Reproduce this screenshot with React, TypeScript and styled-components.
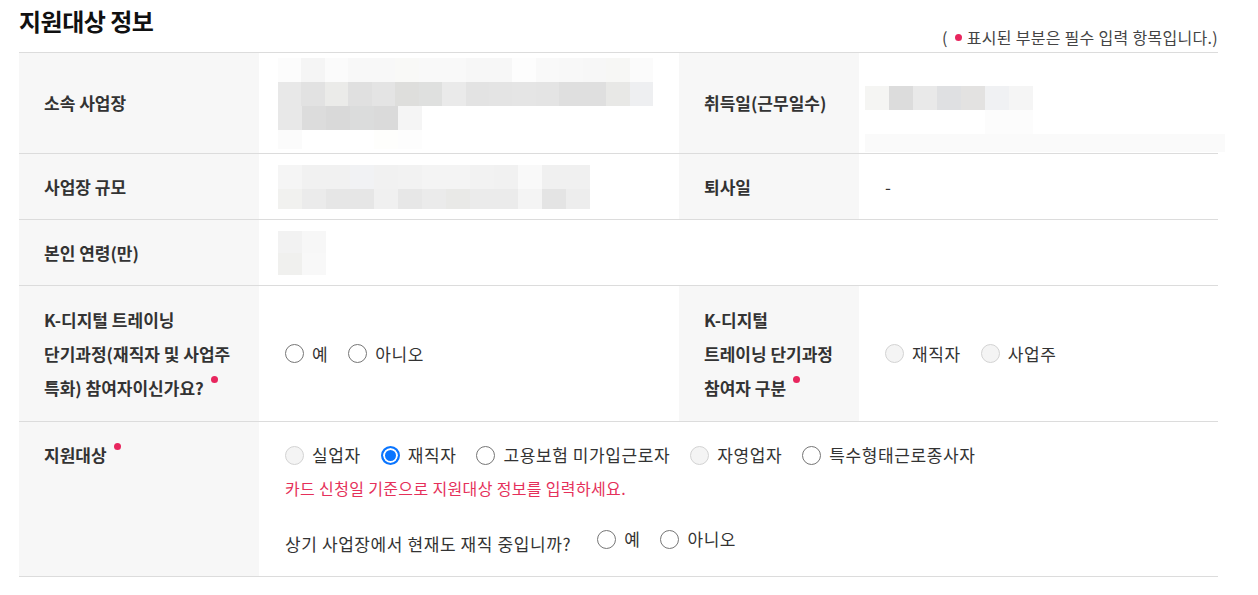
import React from 'react'
import styled, { createGlobalStyle } from 'styled-components'

const GlobalStyle = createGlobalStyle`
  body {
    margin: 0;
    background: #fff;
    font-family: "Noto Sans CJK KR", "Noto Sans", sans-serif;
    color: #333;
  }
`

const Page = styled.div`
  width: 1199px;
  padding-left: 19px;
`

const Header = styled.div`
  display: flex;
  justify-content: space-between;
  height: 52px;
`

const Title = styled.h2`
  margin: 4px 0 0;
  font-size: 24px;
  line-height: 34px;
  font-weight: 700;
  color: #111;
  letter-spacing: -0.5px;
`

const Notice = styled.p`
  align-self: flex-end;
  margin: 0 0 5px;
  font-size: 16px;
  line-height: 20px;
  letter-spacing: 0.3px;
  color: #444;
  display: flex;
  align-items: center;
  gap: 5px;
`

const Dot = styled.span<{ $raised?: boolean }>`
  display: inline-block;
  width: 7px;
  height: 7px;
  border-radius: 50%;
  background: #e8265e;
  margin-left: ${({ $raised }) => ($raised ? '7px' : '2px')};
  vertical-align: ${({ $raised }) => ($raised ? '0.7em' : 'middle')};
`

const Table = styled.div`
  border-top: 1px solid #dcdcdc;
`

const Row = styled.div<{ $h: number }>`
  display: grid;
  grid-template-columns: 240px 420px 180px 1fr;
  min-height: ${({ $h }) => $h}px;
  border-bottom: 1px solid #dcdcdc;
`

const Label = styled.div<{ $top?: boolean; $tall?: boolean }>`
  background: #f7f7f7;
  display: flex;
  align-items: ${({ $top }) => ($top ? 'flex-start' : 'center')};
  padding: ${({ $top }) => ($top ? '21px 25px 0' : '0 25px')};
  font-size: 17px;
  font-weight: 700;
  color: #333;
  line-height: ${({ $tall }) => ($tall ? '34px' : '24px')};
  word-break: keep-all;
`

const Value = styled.div<{ $span?: number; $top?: boolean }>`
  display: flex;
  flex-direction: column;
  justify-content: ${({ $top }) => ($top ? 'flex-start' : 'center')};
  padding: ${({ $top }) => ($top ? '21px 26px 0' : '0 26px')};
  grid-column: span ${({ $span }) => $span ?? 1};
  font-size: 17px;
  color: #333;
  line-height: 24px;
`

const MosaicBox = styled.div<{ $shift: number; $pad?: number }>`
  display: flex;
  flex-direction: column;
  margin-left: ${({ $shift }) => -$shift}px;
  margin-top: ${({ $pad }) => $pad ?? 0}px;
`

const MosaicRow = styled.div<{ $h: number }>`
  display: flex;
  height: ${({ $h }) => $h}px;
`

const Cell = styled.span`
  width: 24px;
  height: 100%;
`

const FaintBar = styled.div<{ $shift: number }>`
  margin-left: ${({ $shift }) => -$shift}px;
  width: 360px;
  height: 18px;
  background: #fafafa;
`

const RadioGroup = styled.div`
  display: flex;
  align-items: center;
  gap: 20px;
`

const RadioItem = styled.label`
  display: inline-flex;
  align-items: center;
  gap: 8px;
  font-size: 17px;
  letter-spacing: 0.6px;
  color: #333;
  white-space: nowrap;
`

const RadioInput = styled.input.attrs({ type: 'radio' })`
  appearance: none;
  margin: 0;
  width: 19px;
  height: 19px;
  border-radius: 50%;
  border: 1.5px solid #767676;
  background: #fff;
  flex-shrink: 0;
  box-sizing: border-box;
  &:disabled {
    border-color: #d3d3d3;
    background: #f4f4f4;
  }
  &:checked {
    border: 2px solid #0a75ff;
    background: #0a75ff;
    box-shadow: inset 0 0 0 2px #fff;
  }
`

const Help = styled.p`
  margin: 10px 0 0;
  font-size: 16px;
  line-height: 22px;
  letter-spacing: 0.35px;
  color: #e5305a;
`

const QuestionRow = styled.div`
  display: flex;
  align-items: center;
  gap: 26px;
  margin-top: 23px;
`

const QuestionText = styled.span`
  padding-top: 10px;
  font-size: 17px;
  letter-spacing: 0.6px;
  color: #333;
`

type MRow = { h: number; cells: string[] }

const Mosaic = ({ rows, shift, pad }: { rows: MRow[]; shift: number; pad?: number }) => (
  <MosaicBox $shift={shift} $pad={pad}>
    {rows.map((r, i) => (
      <MosaicRow key={i} $h={r.h}>
        {r.cells.map((c, j) => (
          <Cell key={j} style={{ background: c }} />
        ))}
      </MosaicRow>
    ))}
  </MosaicBox>
)

const Radio = ({ label, name, checked, disabled }: { label: string; name: string; checked?: boolean; disabled?: boolean }) => (
  <RadioItem>
    <RadioInput name={name} defaultChecked={checked} disabled={disabled} />
    {label}
  </RadioItem>
)

const workplace: MRow[] = [
  { h: 24, cells: ['#fcfcfc', '#f5f5f5', '#fbfbfb', '#f8f8f8', '#f8f8f8', '#f9f9f7', '#f9f9f9', '#f9f9f9', '#f7f7f7', '#f7f7f7', '#fdfdfd', '#f9f9f9', '#f8f8f8', '#f7f7f7', '#f7f7f5', '#fbfbfb'] },
  { h: 24, cells: ['#e8e8e8', '#e2e2e2', '#ebebe9', '#e0e0e0', '#e4e4e4', '#dededc', '#dfe0df', '#eaeaea', '#e3e3e3', '#e4e4e4', '#e5e5e5', '#e4e4e4', '#dfdfdf', '#dfdfdf', '#e8e8e6', '#eeeff1'] },
  { h: 24, cells: ['#e8e8e8', '#dcdcdc', '#d9d9d9', '#dbdcdc', '#dadada', '#f5f5f5'] },
  { h: 19, cells: ['#fbfbfb', '#fff', '#fff', '#fff', '#fefefc', '#fdfdfd'] },
]

const scale: MRow[] = [
  { h: 24, cells: ['#f5f5f5', '#f1f1f1', '#f1f1f1', '#f1f2f4', '#f1f1f1', '#f2f2f2', '#f4f4f4', '#f4f4f4', '#f2f2f2', '#f1f1f1', '#f9f9f9', '#f0f0f0', '#f0f0f0'] },
  { h: 20, cells: ['#f1f1ef', '#ebebeb', '#e6e6e6', '#e6e6e6', '#f0f0f0', '#e7e7e7', '#ebebeb', '#e9e9e7', '#ebebeb', '#ebebeb', '#f4f4f4', '#e4e4e4', '#ededed'] },
]

const age: MRow[] = [
  { h: 22, cells: ['#f2f2f2', '#f7f7f7'] },
  { h: 22, cells: ['#f0f0ee', '#f8f8f8'] },
]

const joinDate: MRow[] = [
  { h: 24, cells: ['#f5f5f3', '#dcdcdc', '#e9e9e9', '#dfe0e2', '#e3e2e1', '#f0f1f3', '#f5f5f5'] },
  { h: 24, cells: ['#fff', '#fff', '#fff', '#fff', '#fff', '#fcfcfc', '#fcfcfc'] },
]

const App = () => (
  <Page>
    <GlobalStyle />
    <Header>
      <Title>지원대상 정보</Title>
      <Notice>
        ( <Dot /> 표시된 부분은 필수 입력 항목입니다.)
      </Notice>
    </Header>
    <Table>
      <Row $h={100}>
        <Label>소속 사업장</Label>
        <Value>
          <Mosaic rows={workplace} shift={7} />
        </Value>
        <Label>취득일(근무일수)</Label>
        <Value $top>
          <Mosaic rows={joinDate} shift={20} pad={12} />
          <FaintBar $shift={20} />
        </Value>
      </Row>
      <Row $h={65}>
        <Label>사업장 규모</Label>
        <Value>
          <Mosaic rows={scale} shift={7} />
        </Value>
        <Label>퇴사일</Label>
        <Value>-</Value>
      </Row>
      <Row $h={65}>
        <Label>본인 연령(만)</Label>
        <Value $span={3}>
          <Mosaic rows={age} shift={7} />
        </Value>
      </Row>
      <Row $h={135}>
        <Label $tall>
          <span>
            K-디지털 트레이닝 단기과정(재직자 및 사업주 특화) 참여자이신가요?
            <Dot $raised />
          </span>
        </Label>
        <Value>
          <RadioGroup>
            <Radio name="ktrain" label="예" />
            <Radio name="ktrain" label="아니오" />
          </RadioGroup>
        </Value>
        <Label $tall>
          <span>
            K-디지털 트레이닝 단기과정 참여자 구분
            <Dot $raised />
          </span>
        </Label>
        <Value>
          <RadioGroup>
            <Radio name="ktype" label="재직자" disabled />
            <Radio name="ktype" label="사업주" disabled />
          </RadioGroup>
        </Value>
      </Row>
      <Row $h={154}>
        <Label $top>
          <span>
            지원대상
            <Dot $raised />
          </span>
        </Label>
        <Value $span={3} $top>
          <RadioGroup>
            <Radio name="target" label="실업자" disabled />
            <Radio name="target" label="재직자" checked />
            <Radio name="target" label="고용보험 미가입근로자" />
            <Radio name="target" label="자영업자" disabled />
            <Radio name="target" label="특수형태근로종사자" />
          </RadioGroup>
          <Help>카드 신청일 기준으로 지원대상 정보를 입력하세요.</Help>
          <QuestionRow>
            <QuestionText>상기 사업장에서 현재도 재직 중입니까?</QuestionText>
            <RadioGroup>
              <Radio name="still" label="예" />
              <Radio name="still" label="아니오" />
            </RadioGroup>
          </QuestionRow>
        </Value>
      </Row>
    </Table>
  </Page>
)

export default App
